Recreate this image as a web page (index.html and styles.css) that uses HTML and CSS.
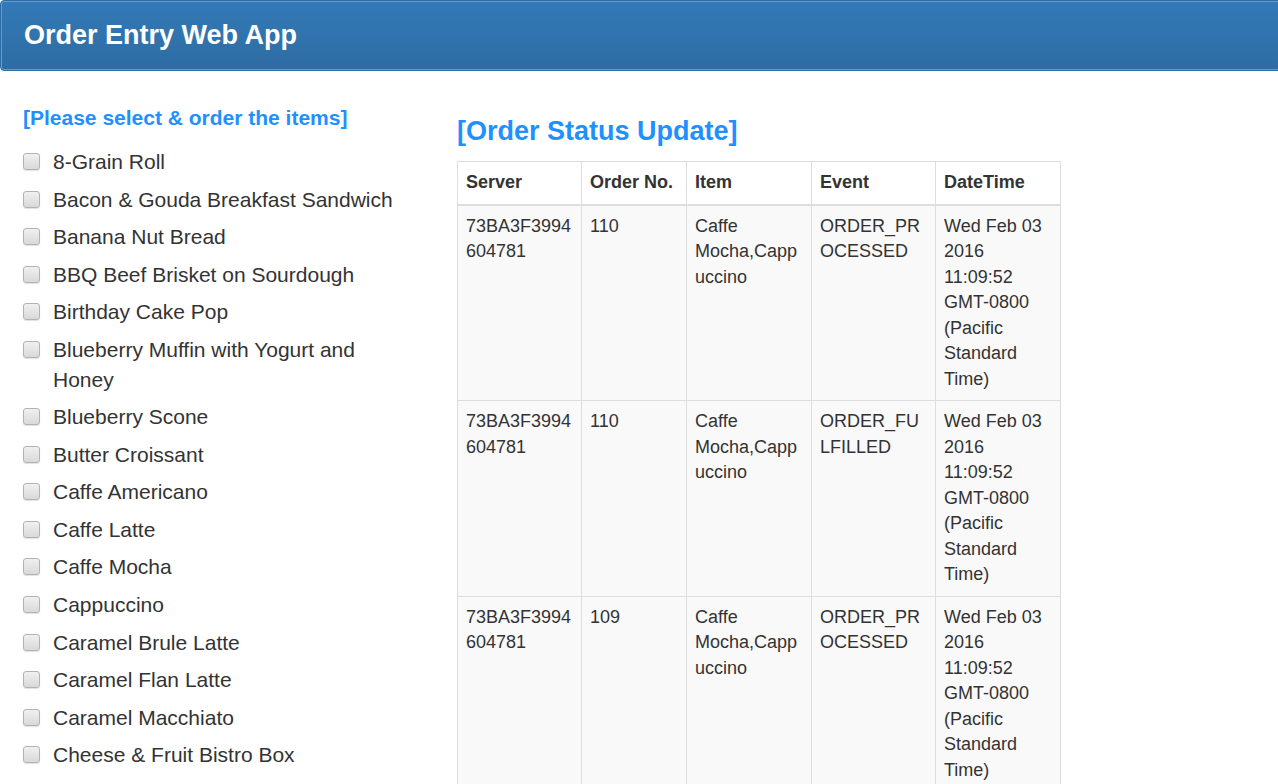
FILE: index.html
```html
<!DOCTYPE html>
<html>
<head>
<meta charset="utf-8">
<title>Order Entry Web App</title>
<link rel="stylesheet" href="styles.css">
</head>
<body>
<header class="app-header"><h1 class="app-title">Order Entry Web App</h1></header>
<main class="layout">
  <section class="menu-col">
    <h2 class="menu-heading">[Please select &amp; order the items]</h2>
    <ul class="menu-list">
      <li class="menu-item"><span class="box"></span><span class="label">8-Grain Roll</span></li>
      <li class="menu-item"><span class="box"></span><span class="label">Bacon &amp; Gouda Breakfast Sandwich</span></li>
      <li class="menu-item"><span class="box"></span><span class="label">Banana Nut Bread</span></li>
      <li class="menu-item"><span class="box"></span><span class="label">BBQ Beef Brisket on Sourdough</span></li>
      <li class="menu-item"><span class="box"></span><span class="label">Birthday Cake Pop</span></li>
      <li class="menu-item"><span class="box"></span><span class="label">Blueberry Muffin with Yogurt and Honey</span></li>
      <li class="menu-item"><span class="box"></span><span class="label">Blueberry Scone</span></li>
      <li class="menu-item"><span class="box"></span><span class="label">Butter Croissant</span></li>
      <li class="menu-item"><span class="box"></span><span class="label">Caffe Americano</span></li>
      <li class="menu-item"><span class="box"></span><span class="label">Caffe Latte</span></li>
      <li class="menu-item"><span class="box"></span><span class="label">Caffe Mocha</span></li>
      <li class="menu-item"><span class="box"></span><span class="label">Cappuccino</span></li>
      <li class="menu-item"><span class="box"></span><span class="label">Caramel Brule Latte</span></li>
      <li class="menu-item"><span class="box"></span><span class="label">Caramel Flan Latte</span></li>
      <li class="menu-item"><span class="box"></span><span class="label">Caramel Macchiato</span></li>
      <li class="menu-item"><span class="box"></span><span class="label">Cheese &amp; Fruit Bistro Box</span></li>
      <li class="menu-item"><span class="box"></span><span class="label">Chicken &amp; Hummus Bistro Box</span></li>
    </ul>
  </section>
  <section class="status-col">
    <h2 class="status-heading">[Order Status Update]</h2>
    <table class="status-table">
      <colgroup>
        <col class="c-server"><col class="c-order"><col class="c-item"><col class="c-event"><col class="c-date">
      </colgroup>
      <thead>
        <tr><th>Server</th><th>Order No.</th><th>Item</th><th>Event</th><th>DateTime</th></tr>
      </thead>
      <tbody>
        <tr><td>73BA3F3994604781</td><td>110</td><td>Caffe Mocha,Cappuccino</td><td>ORDER_PROCESSED</td><td>Wed Feb 03 2016 11:09:52 GMT-0800 (Pacific Standard Time)</td></tr>
        <tr><td>73BA3F3994604781</td><td>110</td><td>Caffe Mocha,Cappuccino</td><td>ORDER_FULFILLED</td><td>Wed Feb 03 2016 11:09:52 GMT-0800 (Pacific Standard Time)</td></tr>
        <tr><td>73BA3F3994604781</td><td>109</td><td>Caffe Mocha,Cappuccino</td><td>ORDER_PROCESSED</td><td>Wed Feb 03 2016 11:09:52 GMT-0800 (Pacific Standard Time)</td></tr>
      </tbody>
    </table>
  </section>
</main>
</body>
</html>
```
FILE: styles.css
```css
html, body {
  margin: 0;
  padding: 0;
  overflow: hidden;
  background: #fff;
}
body {
  font-family: "Liberation Sans", Arial, sans-serif;
  color: #333;
  height: 784px;
}
.app-header {
  box-sizing: border-box;
  height: 71px;
  margin-right: -12px;
  border: 1px solid #2e6da4;
  border-radius: 4px;
  background: linear-gradient(#337ab7, #2e6ca3);
  box-shadow: inset 0 0 0 1px #5e9bd3;
  display: flex;
  align-items: center;
  padding-left: 23px;
}
.app-title {
  margin: 0;
  color: #fff;
  font-size: 27px;
  font-weight: bold;
  line-height: 1.1;
}
.layout {
  display: flex;
  align-items: flex-start;
  padding-left: 23px;
}
.menu-col {
  width: 392px;
  flex: none;
  padding-top: 35px;
}
.menu-heading {
  margin: 0;
  color: #1e90ff;
  font-size: 21px;
  font-weight: bold;
  line-height: 23px;
}
.menu-list {
  list-style: none;
  margin: 18px 0 0;
  padding: 0;
  display: flex;
  flex-direction: column;
  gap: 7.55px;
}
.menu-item {
  display: flex;
  align-items: flex-start;
  font-size: 21px;
  line-height: 30px;
}
.box {
  flex: none;
  box-sizing: border-box;
  width: 17px;
  height: 17px;
  margin-top: 6px;
  margin-right: 13px;
  border: 1px solid #b3b3b3;
  border-radius: 3px;
  background: linear-gradient(#f0f0f0, #d9d9d9);
  box-shadow: 0 1px 1px rgba(0,0,0,0.12);
}
.label {
  flex: 1;
}
.status-col {
  margin-left: 42px;
  padding-top: 45px;
}
.status-heading {
  margin: 0 0 15px;
  color: #1e90ff;
  font-size: 27px;
  font-weight: bold;
  line-height: 30px;
}
.status-table {
  border-collapse: collapse;
  table-layout: fixed;
  width: 603px;
  font-size: 18px;
  line-height: 25.5px;
}
.c-server { width: 124px; }
.c-order { width: 105px; }
.c-item { width: 125px; }
.c-event { width: 124px; }
.c-date { width: 125px; }
.status-table th,
.status-table td {
  border: 1px solid #ddd;
  padding: 8px;
  text-align: left;
  vertical-align: top;
  overflow-wrap: break-word;
}
.status-table th {
  font-weight: bold;
  background: #fff;
  border-bottom: 2px solid #ddd;
}
.status-table td {
  background: #f9f9f9;
}
```
